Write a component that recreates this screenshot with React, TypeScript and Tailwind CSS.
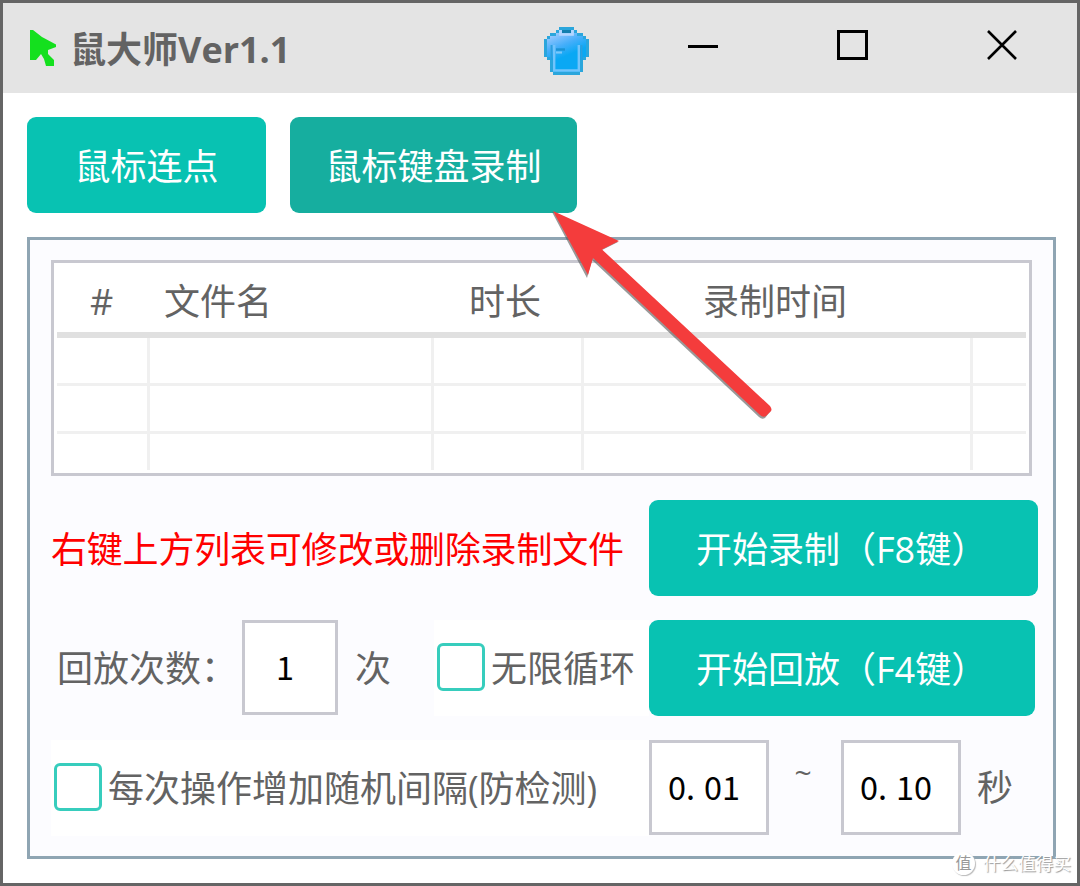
import type { ReactNode } from 'react';

const HEADER_COLS = [
  { label: '#',        cls: 'w-[90px] pl-[33px]' },
  { label: '文件名',   cls: 'w-[284px] pl-[17px]' },
  { label: '时长',     cls: 'w-[150px] pl-[38px]' },
  { label: '录制时间', cls: 'w-[389px] pl-[122px]' },
];

const ROWS = ['h-[48px] border-b-3', 'h-[48px] border-b-3', 'h-[36px]'];

function CursorIcon() {
  return (
    <svg width="30" height="42" viewBox="0 0 30 42" className="shrink-0">
      <path d="M2 1H5L14 8L28 15.500V18L20 21V25L26 31V37H18L16 30L13 25L8 31H2Z" fill="#14e01e" />
    </svg>
  );
}

function ShirtIcon() {
  return (
    <svg width="45" height="48" viewBox="0 0 15 16" className="shrink-0">
      <defs>
        <linearGradient id="shirt" x1="0" y1="0" x2="0.4" y2="1">
          <stop offset="0.1" stopColor="#a4ccff" />
          <stop offset="0.45" stopColor="#45aefa" />
          <stop offset="0.7" stopColor="#0aa8f4" />
        </linearGradient>
      </defs>
      <path d="M5 0H10V1H11V2H13V3H14V4H15V10H14V11H13V15H12V16H3V15H2V11H1V10H0V4H1V3H2V2H4V1H5Z" fill="#2ba6dc" />
      <path d="M5 1H10V2H11V3H13V4H14V10H13V11H12V15H3V11H2V10H1V4H2V3H4V2H5Z" fill="url(#shirt)" />
      <path d="M2.500 6V11M12.500 6V11" stroke="#2b9fdd" strokeWidth="0.6" />
      <path d="M5.5 1V2.500H9.500V1" stroke="#b4d6ff" strokeWidth="0.9" fill="none" />
      <path d="M6 1H9V2H6Z" fill="#137fae" />
      <path d="M3.4 6V14.500H11.600V6" stroke="#72c4fb" strokeWidth="0.8" fill="none" />
      <path d="M4 7.500H7" stroke="#1b92d4" strokeWidth="0.8" />
      <path d="M4 8.500H6" stroke="#7cc8fa" strokeWidth="0.7" />
    </svg>
  );
}

function TitleBar() {
  return (
    <div className="h-[90px] shrink-0 flex items-start bg-[#e4e4e4] pl-[25px] pt-[24px]">
      <div className="pt-[2px]"><CursorIcon /></div>
      <span className="ml-[12px] w-[474px] pt-[1px] font-bold leading-[44px]">鼠大师Ver1.1</span>
      <ShirtIcon />
      <div className="ml-[99px] mt-[18px] w-[30px] h-[3px] bg-black" />
      <div className="ml-[119px] mt-[3px] w-[31px] h-[30px] border-3 border-black" />
      <svg width="32" height="32" viewBox="0 0 32 32" className="ml-[118px] mt-[2px]">
        <path d="M2 2L30 30M30 2L2 30" stroke="#000" strokeWidth="2.6" />
      </svg>
    </div>
  );
}

function Button({ className, children }: { className: string; children: ReactNode }) {
  return (
    <button className={`h-[96px] shrink-0 rounded-[9px] text-white leading-[44px] pt-[4px] ${className}`}>
      {children}
    </button>
  );
}

function CheckBox({ className, label }: { className: string; label: string }) {
  return (
    <label className={`h-[96px] shrink-0 flex items-center bg-white pl-[3px] ${className}`}>
      <span className="w-[48px] h-[48px] shrink-0 border-3 border-[#37cdbd] rounded-[6px] mb-[2px]" />
      <span className="ml-[6px] pt-[2px] whitespace-nowrap">{label}</span>
    </label>
  );
}

function NumberBox({ className, children }: { className: string; children: ReactNode }) {
  return (
    <div className={`h-[95px] mb-[1px] shrink-0 flex items-center bg-white border-3 border-[#c8c8d0] text-black text-[32.4px] font-['Noto_Sans_CJK_SC',sans-serif] ${className}`}>
      <span className="pb-[4px]">{children}</span>
    </div>
  );
}

function RecordTable() {
  return (
    <div className="h-[216px] w-[981px] shrink-0 bg-white border-3 border-[#c8c8d0] px-[3px]">
      <div className="h-[75px] flex items-center border-b-6 border-[#e0e0e0] pt-[8px]">
        {HEADER_COLS.map((c) => (
          <div key={c.label} className={`shrink-0 ${c.cls}`}>{c.label}</div>
        ))}
      </div>
      {ROWS.map((cls, i) => (
        <div key={i} className={`flex border-[#f0f0f0] ${cls}`}>
          <div className="w-[93px] border-r-3 border-[#f0f0f0]" />
          <div className="w-[284px] border-r-3 border-[#f0f0f0]" />
          <div className="w-[150px] border-r-3 border-[#f0f0f0]" />
          <div className="w-[389px] border-r-3 border-[#f0f0f0]" />
        </div>
      ))}
    </div>
  );
}

// Red pointer that sits over the tab button and the table
function PointerArrow() {
  return (
    <svg width="240" height="230" viewBox="545 200 240 230" className="absolute left-[542px] top-[197px]">
      <path
        d="M553 211L619 241L602 249.500L770 406Q773 410 770 412L766 417Q763 419 760 416L593 259L588 277Z"
        fill="#555" opacity="0.6" transform="translate(-1 1)"
      />
      <path d="M553 211L619 241L602 249.500L770 406Q773 410 770 412L766 416Q763 418 760 415L593 258L588 275Z" fill="#f43c3c" />
    </svg>
  );
}

function Watermark() {
  return (
    <div className="absolute left-[949px] top-[848px] flex items-center text-white text-[17.6px] leading-[24px] [text-shadow:1px_1px_1px_#999]">
      <span className="w-[23px] h-[23px] rounded-full bg-white text-[#999] text-[16px] leading-[22px] text-center shadow-[1px_1px_1px_#bbb] [text-shadow:none]">值</span>
      <span className="ml-[8px]">什么值得买</span>
    </div>
  );
}

export default function App() {
  return (
    <div className="relative w-[1080px] h-[886px] overflow-hidden flex flex-col bg-white border-3 border-[#656565] text-[#636363] text-[36px] leading-[48px] font-['Open_Sans','Noto_Sans_CJK_SC',sans-serif]">
      <TitleBar />

      {/* Tabs */}
      <div className="flex gap-[24px] pl-[24px] pt-[24px]">
        <Button className="w-[239px] bg-[#08c2b2]">鼠标连点</Button>
        <Button className="w-[287px] bg-[#16ae9f]">鼠标键盘录制</Button>
      </div>

      {/* Recording panel */}
      <div className="ml-[24px] mt-[24px] w-[1029px] h-[622px] shrink-0 flex flex-col gap-[24px] bg-[#fcfcff] border-3 border-[#8fa5b3] pt-[20px] pl-[21px]">
        <RecordTable />

        <div className="flex items-center">
          <span className="w-[598px] pt-[3px] text-[#ff0000] tracking-[-0.2px] whitespace-nowrap">右键上方列表可修改或删除录制文件</span>
          <Button className="w-[389px] bg-[#08c2b2] text-left pl-[47px]">开始录制（F8键）</Button>
        </div>

        <div className="flex items-center">
          <span className="w-[191px] pl-[6px] pt-[2px] whitespace-nowrap">回放次数：</span>
          <NumberBox className="w-[96px] pl-[31px]">1</NumberBox>
          <span className="ml-[17px] w-[79px] pt-[2px]">次</span>
          <CheckBox className="w-[215px]" label="无限循环" />
          <Button className="w-[386px] bg-[#08c2b2] text-left pl-[47px]">开始回放（F4键）</Button>
        </div>

        <div className="flex items-center">
          <CheckBox className="w-[598px]" label="每次操作增加随机间隔(防检测)" />
          <NumberBox className="w-[120px] pl-[16px]">0<span className="tracking-[9px]">.</span>01</NumberBox>
          <span className="w-[72px] pb-[30px] pr-[4px] text-center text-[30px]">~</span>
          <NumberBox className="w-[120px] pl-[16px]">0<span className="tracking-[9px]">.</span>10</NumberBox>
          <span className="ml-[16px]">秒</span>
        </div>
      </div>

      <PointerArrow />
      <Watermark />
    </div>
  );
}
